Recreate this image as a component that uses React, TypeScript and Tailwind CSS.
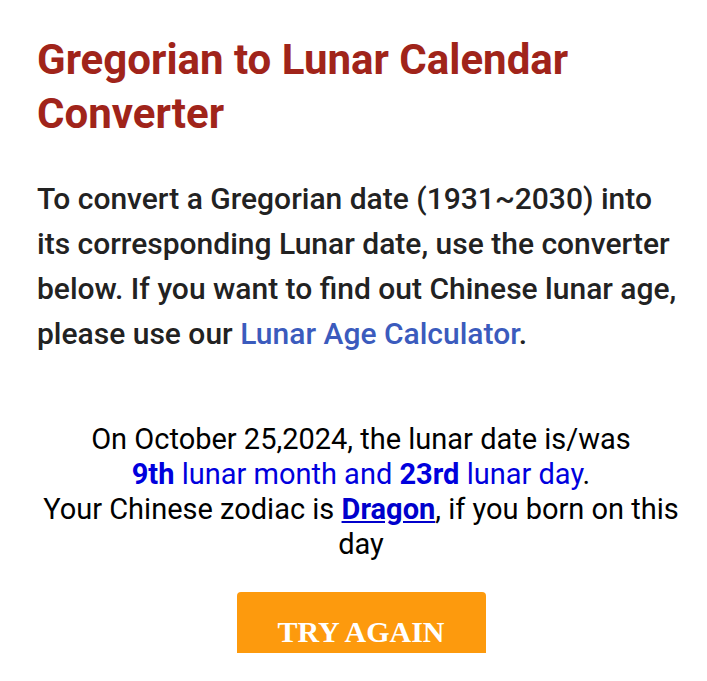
export default function App() {
  return (
    <div className="h-[681px] w-[707px] bg-white font-['Roboto',sans-serif]">
      <div className="h-[653px] overflow-hidden pl-[37px] pr-[22px] pt-[33px]">
        <h1 className="text-[42px] font-bold leading-[54px] text-[#a0241a]">
          Gregorian to Lunar Calendar Converter
        </h1>
        <p className="mt-[35px] text-[30px] font-medium leading-[45px] text-[#222222]">
          To convert a Gregorian date (1931~2030) into its corresponding Lunar date, use the converter
          below. If you want to find out Chinese lunar age, please use our{' '}
          <a href="#" className="text-[#3b5bbd]">Lunar Age Calculator</a>.
        </p>
        <div className="mt-[66px] text-center text-[29px] leading-[35px] text-black">
          <div>On October 25,2024, the lunar date is/was</div>
          <div className="text-[#0000dd]">
            <b>9th</b> lunar month and <b>23rd</b> lunar day<span className="text-black">.</span>
          </div>
          <div>
            Your Chinese zodiac is{' '}
            <a href="#" className="font-bold text-[#0000cc] underline">Dragon</a>, if you born on this day
          </div>
        </div>
        <div className="mt-[30px] flex justify-center">
          <button className="h-[78px] w-[249px] rounded-[4px] bg-[#fd9a0d] font-['Liberation_Serif',serif] text-[30px] font-bold text-white">
            TRY AGAIN
          </button>
        </div>
      </div>
    </div>
  );
}
